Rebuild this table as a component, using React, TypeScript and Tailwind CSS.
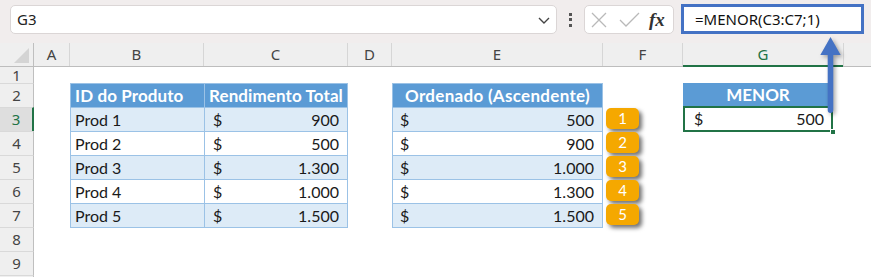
import React from "react";

const BORDER = "border-[#9bc2e6]";
const left = [
  ["Prod 1", "900"],
  ["Prod 2", "500"],
  ["Prod 3", "1.300"],
  ["Prod 4", "1.000"],
  ["Prod 5", "1.500"],
];
const sorted = ["500", "900", "1.000", "1.300", "1.500"];

function RowHeader({ n, h, sel }: { n?: number; h: string; sel?: boolean }) {
  return (
    <div
      className={`w-[34px] shrink-0 flex items-center justify-center text-[15px] ${h} ${
        n !== 1 ? "border-t border-t-[#d9d9d9]" : ""
      } ${
        sel
          ? "bg-[#dedede] text-[#217346] border-r-2 border-r-[#217346]"
          : "bg-[#efefef] text-[#444444] border-r border-r-[#bfbfbf]"
      }`}
      style={{ fontFamily: '"Noto Sans", sans-serif' }}
    >
      {n}
    </div>
  );
}

function Badge({ n }: { n: number }) {
  return (
    <div className="ml-[3px] mt-[1px] w-[33px] h-[21px] rounded-[5px] bg-[#f5a800] text-white text-[15px] flex items-center justify-center shadow-[3px_3px_4px_rgba(0,0,0,0.55)]">
      {n}
    </div>
  );
}

function Money({ v, cls }: { v: string; cls: string }) {
  return (
    <div className={`flex items-center justify-between h-full ${cls}`}>
      <span>$</span>
      <span>{v}</span>
    </div>
  );
}

export default function App() {
  return (
    <div
      className="relative w-[871px] h-[277px] overflow-hidden bg-white text-[#1a1a1a]"
      style={{ fontFamily: 'Lato, "Liberation Sans", sans-serif' }}
    >
      {/* Top formula bar */}
      <div
        className="h-[43px] bg-[#f1eded] flex items-start pt-[5px] pl-[10px]"
        style={{ fontFamily: '"Noto Sans", "Open Sans", sans-serif' }}
      >
        <div className="w-[547px] h-[29px] bg-white rounded-[5px] border border-[#dbd6d6] flex items-center justify-between pl-[6px] pr-[5px] text-[15px] text-[#222]">
          <span>G3</span>
          <svg width="14" height="10" viewBox="0 0 14 10">
            <path d="M2 3 L7 8 L12 3" fill="none" stroke="#444" strokeWidth="1.4" />
          </svg>
        </div>
        <div className="w-[27px] h-[29px] flex flex-col items-center justify-center gap-[2.5px]">
          <div className="w-[3px] h-[3px] bg-[#555]" />
          <div className="w-[3px] h-[3px] bg-[#555]" />
          <div className="w-[3px] h-[3px] bg-[#555]" />
        </div>
        <div className="w-[90px] h-[29px] bg-white rounded-[5px] border border-[#dbd6d6] flex items-center pl-[6px]">
          <svg width="16" height="16" viewBox="0 0 16 16">
            <path d="M1 1 L15 15 M15 1 L1 15" stroke="#b9b9b9" strokeWidth="1.3" fill="none" />
          </svg>
          <svg width="21" height="16" viewBox="0 0 21 16" className="ml-[12px]">
            <path d="M1 8 L7 14 L20 1" stroke="#b9b9b9" strokeWidth="1.3" fill="none" />
          </svg>
          <span
            className="ml-[9px] text-[19px] italic font-bold text-[#333] leading-none"
            style={{ fontFamily: '"Liberation Serif", serif' }}
          >
            fx
          </span>
        </div>
        <div className="ml-[7px] w-[183px] h-[30px] -mt-[1px] bg-white border-[3px] border-[#4472c4] flex items-center pl-[11px] text-[15px] text-[#111]">
          =MENOR(C3:C7;1)
        </div>
      </div>

      {/* Column headers */}
      <div
        className="flex h-[24px] bg-[#efefef] border-b border-[#bdbdbd] text-[15px] text-[#444]"
        style={{ fontFamily: '"Noto Sans", sans-serif' }}
      >
        <div className="w-[34px] shrink-0 border-r border-[#bfbfbf] flex items-end justify-end pr-[4px] pb-[3px]">
          <svg width="15" height="15" viewBox="0 0 15 15">
            <path d="M15 0 L15 15 L0 15 Z" fill="#d4d4d4" />
          </svg>
        </div>
        <div className="w-[36px] shrink-0 border-r border-[#d6d6d6] flex items-center justify-center">A</div>
        <div className="w-[134px] shrink-0 border-r border-[#d6d6d6] flex items-center justify-center">B</div>
        <div className="w-[144px] shrink-0 border-r border-[#d6d6d6] flex items-center justify-center">C</div>
        <div className="w-[44px] shrink-0 border-r border-[#d6d6d6] flex items-center justify-center">D</div>
        <div className="w-[211px] shrink-0 border-r border-[#d6d6d6] flex items-center justify-center">E</div>
        <div className="w-[80px] shrink-0 border-r border-[#d6d6d6] flex items-center justify-center">F</div>
        <div className="relative w-[161px] shrink-0 border-r border-[#d6d6d6] flex items-center justify-center text-[#217346]">
          G
          <div className="absolute left-0 right-0 -bottom-[1px] h-[2px] bg-[#217346]" />
        </div>
        <div className="flex-1" />
      </div>

      {/* Row 1 */}
      <div className="flex h-[16px]">
        <RowHeader n={1} h="h-[16px]" />
      </div>

      {/* Row 2: headers */}
      <div className="flex h-[24px] text-[17px]">
        <RowHeader n={2} h="h-[24px]" />
        <div className="w-[36px] shrink-0" />
        <div className={`w-[134px] shrink-0 bg-[#5b9bd5] border-l border-t ${BORDER} text-white font-bold flex items-center pl-[4px] tracking-[0.1px]`}>
          ID do Produto
        </div>
        <div className={`w-[144px] shrink-0 bg-[#5b9bd5] border-l border-t border-r ${BORDER} text-white font-bold flex items-center pl-[4px] tracking-[0.1px]`}>
          Rendimento Total
        </div>
        <div className="w-[44px] shrink-0" />
        <div className={`w-[211px] shrink-0 bg-[#5b9bd5] border-l border-t border-r ${BORDER} text-white font-bold flex items-center justify-center tracking-[0.3px]`}>
          Ordenado (Ascendente)
        </div>
        <div className="w-[80px] shrink-0" />
        <div className="w-[150px] shrink-0 bg-[#5b9bd5] text-white font-bold flex items-center justify-center">
          MENOR
        </div>
      </div>

      {/* Rows 3-7 */}
      {left.map(([id, v], i) => {
        const stripe = i % 2 === 0 ? "bg-[#ddebf7]" : "bg-white";
        return (
          <div key={i} className="flex h-[24px] text-[16px]">
            <RowHeader n={i + 3} h="h-[24px]" sel={i === 0} />
            <div className="w-[36px] shrink-0" />
            <div className={`w-[134px] shrink-0 ${stripe} border-l border-t ${BORDER} flex items-center pl-[4px]`}>
              {id}
            </div>
            <div className={`w-[144px] shrink-0 ${stripe} border-l border-t border-r ${BORDER}`}>
              <Money v={v} cls="pl-[8px] pr-[8px]" />
            </div>
            <div className="w-[44px] shrink-0" />
            <div className={`w-[211px] shrink-0 ${stripe} border-l border-t border-r ${BORDER}`}>
              <Money v={sorted[i]} cls="pl-[7px] pr-[8px]" />
            </div>
            <div className="w-[80px] shrink-0">
              <Badge n={i + 1} />
            </div>
            {i === 0 && (
              <div className="relative w-[150px] shrink-0">
                <Money v="500" cls="pl-[11px] pr-[9px]" />
                <div className="absolute left-0 right-0 -top-[1px] -bottom-[1px] border-2 border-[#217346]" />
                <div className="absolute -right-[3px] -bottom-[4px] w-[6px] h-[6px] bg-[#217346] border border-white" />
              </div>
            )}
          </div>
        );
      })}

      {/* Row 8 */}
      <div className="flex h-[24px]">
        <RowHeader n={8} h="h-[24px]" />
        <div className="w-[36px] shrink-0" />
        <div className={`w-[134px] shrink-0 border-t ${BORDER}`} />
        <div className={`w-[144px] shrink-0 border-t ${BORDER}`} />
        <div className="w-[44px] shrink-0" />
        <div className={`w-[211px] shrink-0 border-t ${BORDER}`} />
      </div>
      {/* Row 9 */}
      <div className="flex h-[24px]">
        <RowHeader n={9} h="h-[24px]" />
      </div>
      <div className="flex h-[24px]">
        <RowHeader h="h-[24px]" />
      </div>

      {/* Arrow overlay */}
      <svg
        className="absolute left-[815px] top-[32px]"
        width="35"
        height="90"
        viewBox="0 0 35 90"
        style={{ filter: "drop-shadow(2px 2px 2px rgba(0,0,0,0.35))" }}
      >
        <path
          d="M15.5 5 L25.7 23 L18.3 23 L18.3 78 Q18.3 81 15.5 81 Q12.7 81 12.7 78 L12.7 23 L5.3 23 Z"
          fill="#4472c4"
        />
      </svg>
    </div>
  );
}
